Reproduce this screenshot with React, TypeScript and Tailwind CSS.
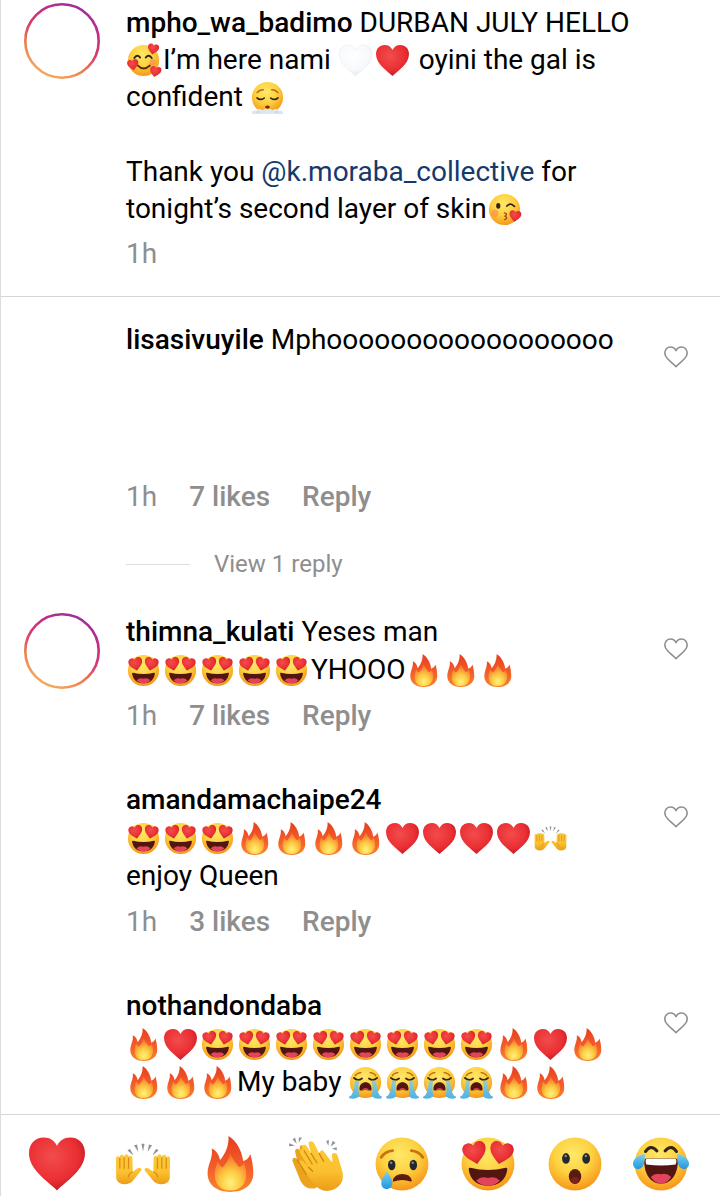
import * as React from 'react';

type EmojiName =
  | 'heart'
  | 'whiteHeart'
  | 'fire'
  | 'hands'
  | 'clap'
  | 'tear'
  | 'heartEyes'
  | 'wow'
  | 'joy'
  | 'adore'
  | 'exhale'
  | 'kiss'
  | 'sob';

const HEART =
  'M18 35C12 29 0 22 0 11C0 5 4 1 9.5 1C13.5 1 16.5 3 18 6.5C19.5 3 22.5 1 26.5 1C32 1 36 5 36 11C36 22 24 29 18 35Z';
const RED_EYE = 'url(#red)';

const face = <circle cx="18" cy="18" r="17" fill="url(#face)" />;

const hand = (
  <g>
    <path
      d="M.6 14.5Q.6 13 1.8 13Q2.8 13 3 14Q3 12 4.4 12Q5.7 12 5.8 13.5Q6 11.8 7.3 11.8Q8.8 11.8 8.8 13.5Q9.3 12.6 10.2 12.8Q11.2 13 11.2 14.5L11.4 23L14.6 20.8Q16.6 20 17 21.3Q17.1 22 16.3 22.8L11.6 28.6Q9.4 31.2 5.8 31Q1.6 30.8.8 27.4Z"
      fill="url(#hand)"
    />
    <path d="M3.1 14V21M5.9 13.6V21M8.7 13.8V21M11.3 23Q8.8 24 8.6 26.6" stroke="#d98b12" strokeWidth=".8" fill="none" />
  </g>
);

const drawings: Record<EmojiName, React.ReactNode> = {
  heart: <path d={HEART} fill="url(#red)" />,
  whiteHeart: <path d={HEART} fill="url(#white)" stroke="#e9edf3" strokeWidth=".6" />,
  fire: (
    <g>
      <path
        d="M17 0C22 3 25.5 9 26.5 16C28.5 15.5 30.3 14 31 11.5C32.2 15 33 19.5 33 24C33 31.5 27 36 18.3 36C9.5 36 3.6 31.5 3.6 24C3.6 18 7.2 14.5 6.3 8C9 9 11 12 11.6 15.5C15 11.5 17.5 6 17 0Z"
        fill="url(#flame)"
      />
      <path
        d="M18 11C20 15.6 22 17.5 23.8 20C25.4 19.6 26.4 18.6 27 17C30 25 29 34.6 18.4 35C8 34.6 6.4 26 10 16.5C11.2 18.6 12 19.8 13.2 20.2C15.5 18 17.6 14.6 18 11Z"
        fill="url(#flameCore)"
      />
    </g>
  ),
  hands: (
    <g>
      {hand}
      <g transform="translate(36 0) scale(-1 1)">{hand}</g>
      <path
        d="M8 9.4L9.6 8.2L12 12.6ZM12.2 6L14.2 5.5L15 10.3ZM17 5H19L18 10ZM21.8 5.5L23.8 6L21 10.3ZM26.4 8.2L28 9.4L24 12.6Z"
        fill="#8e939b"
      />
    </g>
  ),
  clap: (
    <g>
      <path
        d="M3 16.4Q2.4 14.4 4 14Q5 13.7 5.7 15L4.7 10.6Q4.2 8.6 5.8 8.2Q7 8 7.6 9.3Q7.1 6 9 5.8L25 29L17.5 33.6Q11.5 34.8 8.2 29.2Z"
        fill="#eba31d"
      />
      <path
        d="M9.1 6.4Q10.7 4.6 12.4 7L14.7 11L13.4 6Q12.8 3.8 14.6 3.4Q16.2 3.2 17.1 5.1L19.9 11L21 9.6Q22 8.6 23 10L28 16.5Q28.6 17 28.6 15.5L28.2 12.8Q28.2 11 29.8 11Q31.4 11 32 13L34.8 22.2Q37 31 29.3 34.4Q22.2 37.4 16.8 31L7.5 18.8Q6.2 16.8 7.7 15.9Q9 15.1 10.4 16.8L13 19.8L8.2 11.8Q6.9 9.4 8.3 8.5Q9.2 8 10.2 9.2Q8.4 7.3 9.1 6.4Z"
        fill="url(#hand)"
      />
      <path
        d="M5.8 15.2L12 25M10.2 9.2L15.7 18.3M14.7 11L18.8 17.5M19.9 11L23.1 16.6M13 19.8L16 23"
        stroke="#cf8512"
        strokeWidth=".8"
        fill="none"
      />
      <path
        d="M.6 6.6L.9 4.6L4.5 6.2ZM2.9 2.2L4.5 1L5.6 5ZM7 1H9L6.9 4.4ZM24.5 3.2L26.3 2.6L26 6.4ZM28.8 3L30.5 4.5L27.4 6.8ZM31.3 7.2L31.4 9.2L28.2 8.2Z"
        fill="#8e939b"
      />
    </g>
  ),
  tear: (
    <g>
      {face}
      <ellipse cx="11.4" cy="18.6" rx="2.4" ry="3.4" fill="#25292f" />
      <ellipse cx="25.3" cy="18.6" rx="2.4" ry="3.4" fill="#25292f" />
      <circle cx="11" cy="17.2" r=".8" fill="#7d8791" />
      <circle cx="24.9" cy="17.2" r=".8" fill="#7d8791" />
      <path d="M4.6 13.7Q7.5 9.7 12 9.4M24 9.4Q28.5 9.7 31.4 13.7" stroke="#c9730f" strokeWidth="1.8" strokeLinecap="round" fill="none" />
      <path d="M12.6 28.8Q13.5 25 18.2 25Q22.8 25 23.8 28.8Q18 26.8 12.6 28.8Z" fill="#5c1d10" stroke="#5c1d10" strokeWidth="1" strokeLinejoin="round" />
      <path d="M8.4 22.4C7 25.5 4.7 27.3 4.7 30.3C4.7 32.6 6.2 34 8.2 34C10.2 34 11.8 32.5 11.8 30.3C11.8 27.3 9.7 25.5 8.4 22.4Z" fill="url(#water)" />
    </g>
  ),
  heartEyes: (
    <g>
      {face}
      <path d="M6.6 20.4Q18 23.4 29.4 20.4Q30.6 20.2 30.4 21.8C29.4 28.2 24.6 32 18 32C11.4 32 6.6 28.2 5.6 21.8Q5.4 20.2 6.6 20.4Z" fill="#52150f" />
      <path d="M10.4 28.8Q13.5 25.6 18 27Q22.5 25.6 25.6 28.8Q22.4 32 18 32Q13.6 32 10.4 28.8Z" fill="#e2445b" />
      <path transform="translate(.6 5.2) rotate(-12) scale(.42)" d={HEART} fill={RED_EYE} />
      <path transform="translate(20.6 2.1) rotate(12) scale(.42)" d={HEART} fill={RED_EYE} />
    </g>
  ),
  wow: (
    <g>
      {face}
      <ellipse cx="12.2" cy="14.4" rx="2.5" ry="3.4" fill="#25292f" />
      <ellipse cx="25.2" cy="14.4" rx="2.5" ry="3.4" fill="#25292f" />
      <circle cx="12" cy="12.8" r=".8" fill="#7d8791" />
      <circle cx="25" cy="12.8" r=".8" fill="#7d8791" />
      <ellipse cx="18" cy="26" rx="4" ry="4.8" fill="#571b13" />
      <ellipse cx="18" cy="28.3" rx="2.6" ry="2" fill="#7d2318" />
    </g>
  ),
  joy: (
    <g>
      {face}
      <path d="M8 10Q11.4 5 15.4 9.6M20.6 9.6Q24.6 5 28 10" stroke="#33231a" strokeWidth="1.9" strokeLinecap="round" fill="none" />
      <path d="M8.4 14.4H27.6Q28.8 14.6 28.8 16.2C28.8 24.4 24.6 30.6 18 30.6C11.4 30.6 7.2 24.4 7.2 16.2Q7.2 14.6 8.4 14.4Z" fill="#52150f" />
      <path d="M8.6 14.6H27.4Q28.4 16 27.4 18.3Q18 19.7 8.6 18.3Q7.6 16 8.6 14.6Z" fill="#fff" />
      <path d="M11.4 26.4Q14.4 23.4 18 24.6Q21.6 23.4 24.6 26.4Q22 30.6 18 30.6Q14 30.6 11.4 26.4Z" fill="#e2445b" />
      <path d="M7.6 11.4C4 12.4-.6 14.6 0 18.4C.4 21 3 22 5 20.8C7.8 19 7.4 14.8 7.6 11.4Z" fill="url(#water)" />
      <path d="M28.4 11.4C32 12.4 36.6 14.6 36 18.4C35.6 21 33 22 31 20.8C28.2 19 28.6 14.8 28.4 11.4Z" fill="url(#water)" />
    </g>
  ),
  adore: (
    <g>
      {face}
      <circle cx="8" cy="20" r="3.6" fill="#f58a54" opacity=".6" />
      <circle cx="28" cy="20" r="3.6" fill="#f58a54" opacity=".6" />
      <path d="M8 15.2Q11 10.6 14.4 14.8M20.4 14.8Q23.8 10.6 27 15.2" stroke="#33231a" strokeWidth="2" strokeLinecap="round" fill="none" />
      <path d="M12 23.5Q18 30 25 23.5" stroke="#5c2912" strokeWidth="2" strokeLinecap="round" fill="none" />
      <path transform="translate(23.6 -1.4) rotate(10) scale(.34)" d={HEART} fill={RED_EYE} />
      <path transform="translate(-.4 17.6) rotate(-8) scale(.34)" d={HEART} fill={RED_EYE} />
      <path transform="translate(26.2 23) rotate(12) scale(.34)" d={HEART} fill={RED_EYE} />
    </g>
  ),
  exhale: (
    <g>
      {face}
      <path d="M6.8 12.6Q9.4 9.2 13.4 9.6M22.6 9.6Q26.6 9.2 29.2 12.6" stroke="#b9690f" strokeWidth="1.6" strokeLinecap="round" fill="none" />
      <path d="M6.6 18.4Q10 21.8 14.4 18.6M21.6 18.6Q26 21.8 29.4 18.4" stroke="#33231a" strokeWidth="1.8" strokeLinecap="round" fill="none" />
      <ellipse cx="18" cy="28.4" rx="2.5" ry="1.7" fill="#6b2a12" />
      <path
        d="M1 36C0 33 3.4 31.4 5.6 32.4C7 29.8 11 30 12.4 32C14 30 16.5 29.8 18 30.8C19.5 29.8 22 30 23.6 32C25 30 29 29.8 30.4 32.4C32.6 31.4 36 33 35 36Z"
        fill="#dbe7f2"
      />
      <path d="M6 35Q7 32.8 10 34M26 34Q29 32.8 30 35" stroke="#b4c9dc" strokeWidth=".8" fill="none" />
    </g>
  ),
  kiss: (
    <g>
      {face}
      <circle cx="7.4" cy="22.2" r="4" fill="#f7835a" opacity=".55" />
      <ellipse cx="11.2" cy="14" rx="2.3" ry="3.2" fill="#33231a" />
      <path d="M20.6 14.2Q24.4 9.8 28.8 14.6" stroke="#33231a" strokeWidth="2" strokeLinecap="round" fill="none" />
      <path d="M17.8 21.6Q22.4 22.8 18.6 25.2Q22.6 27.2 18 29.2" stroke="#a04a17" strokeWidth="1.4" strokeLinecap="round" fill="none" />
      <path transform="translate(24 18) rotate(8) scale(.36)" d={HEART} fill={RED_EYE} />
    </g>
  ),
  sob: (
    <g>
      {face}
      <path d="M6.8 10.6Q9 7.4 13 7.2M23 7.2Q27 7.4 29.2 10.6" stroke="#b9690f" strokeWidth="1.4" strokeLinecap="round" fill="none" />
      <path d="M5.4 13Q9.4 17 14.2 13.6M21.8 13.6Q26.6 17 30.6 13" stroke="#33231a" strokeWidth="2" strokeLinecap="round" fill="none" />
      <path d="M11.4 25C11.4 20.2 14.4 17.6 18 17.6C21.6 17.6 24.6 20.2 24.6 25Q24.6 27.2 22.8 26.8Q18 25.4 13.2 26.8Q11.4 27.2 11.4 25Z" fill="#52150f" />
      <path d="M13.8 26.4Q18 21.4 22.2 26.4Q18 25.2 13.8 26.4Z" fill="#e2445b" />
      <path d="M6.2 16H11Q9.4 25 11.4 33Q6 37.4 0 35Q-.6 33.4 2.6 32Q6.6 24 6.2 16Z" fill="url(#stream)" />
      <path d="M29.8 16H25Q26.6 25 24.6 33Q30 37.4 36 35Q36.6 33.4 33.4 32Q29.4 24 29.8 16Z" fill="url(#stream)" />
    </g>
  ),
};

function Gradients() {
  return (
    <svg aria-hidden="true" className="absolute h-0 w-0">
      <defs>
        <radialGradient id="face" cx=".46" cy=".32" r=".72">
          <stop offset="0" stopColor="#ffe868" />
          <stop offset=".5" stopColor="#fdd140" />
          <stop offset="1" stopColor="#f58f14" />
        </radialGradient>
        <radialGradient id="red" cx=".42" cy=".36" r=".75">
          <stop offset="0" stopColor="#f24c4c" />
          <stop offset=".6" stopColor="#ea2f33" />
          <stop offset="1" stopColor="#b5101f" />
        </radialGradient>
        <radialGradient id="white" cx=".45" cy=".35" r=".75">
          <stop offset="0" stopColor="#ffffff" />
          <stop offset=".6" stopColor="#f8f9fd" />
          <stop offset="1" stopColor="#dbe1ec" />
        </radialGradient>
        <linearGradient id="flame" x1="0" y1="0" x2="0" y2="1">
          <stop offset="0" stopColor="#e63d1f" />
          <stop offset=".6" stopColor="#f4602a" />
          <stop offset="1" stopColor="#f9862c" />
        </linearGradient>
        <radialGradient id="flameCore" cx=".5" cy=".8" r=".8">
          <stop offset="0" stopColor="#fff17c" />
          <stop offset=".4" stopColor="#fecb42" />
          <stop offset="1" stopColor="#f4602a" />
        </radialGradient>
        <linearGradient id="hand" x1="0" y1="0" x2="0" y2="1">
          <stop offset="0" stopColor="#fccb3a" />
          <stop offset=".6" stopColor="#fbc02f" />
          <stop offset="1" stopColor="#ec9c17" />
        </linearGradient>
        <linearGradient id="water" x1="0" y1="0" x2="0" y2="1">
          <stop offset="0" stopColor="#7fd0f2" />
          <stop offset="1" stopColor="#1f98dd" />
        </linearGradient>
        <linearGradient id="stream" x1="0" y1="0" x2="0" y2="1">
          <stop offset="0" stopColor="#8ecfd0" />
          <stop offset="1" stopColor="#4db1e6" />
        </linearGradient>
        <linearGradient id="ring" x1=".25" y1="1" x2=".75" y2="0">
          <stop offset="0" stopColor="#f7b15f" />
          <stop offset=".3" stopColor="#ec7a4e" />
          <stop offset=".5" stopColor="#d83d6e" />
          <stop offset=".75" stopColor="#c62b85" />
          <stop offset="1" stopColor="#962fa0" />
        </linearGradient>
      </defs>
    </svg>
  );
}

function Emoji({ name, className }: { name: EmojiName; className: string }) {
  return (
    <svg viewBox="0 0 36 36" role="img" aria-label={name} className={className}>
      {drawings[name]}
    </svg>
  );
}

/* Emoji set inside a line of text */
function E({ name, count = 1 }: { name: EmojiName; count?: number }) {
  return (
    <>
      {Array.from({ length: count }, (_, i) => (
        <Emoji key={i} name={name} className="mr-[3px] ml-px inline size-[33px] overflow-visible align-[-8px]" />
      ))}
    </>
  );
}

function Avatar({ story }: { story?: boolean }) {
  return (
    <div className="size-[76px] shrink-0">
      {story ? (
        <svg viewBox="0 0 76 76" aria-hidden="true" className="size-full">
          <circle cx="38" cy="38" r="36.7" fill="none" stroke="url(#ring)" strokeWidth="2.6" />
        </svg>
      ) : null}
    </div>
  );
}

type CommentProps = {
  user: string;
  likes: string;
  story?: boolean;
  replies?: number;
  children: React.ReactNode;
};

function Comment({ user, likes, story, replies, children }: CommentProps) {
  return (
    <li className="flex gap-[26px] pr-8 pl-[23px]">
      <Avatar story={story} />
      <div className="min-w-0 flex-1">
        <p className="leading-[38px]">
          <a href={`#${user}`} className="font-medium">
            {user}
          </a>{' '}
          {children}
        </p>
        <div className="mt-2 flex gap-8 text-[#8e8e8e]">
          <span>1h</span>
          <button type="button" className="font-medium">
            {likes}
          </button>
          <button type="button" className="font-medium">
            Reply
          </button>
        </div>
        {replies ? (
          <button type="button" className="mt-[31px] -mb-[17px] flex items-center gap-6 text-2xl leading-[37px] text-[#8e8e8e]">
            <span className="h-px w-16 bg-[#dedede]" />
            View {replies} reply
          </button>
        ) : null}
      </div>
      <button type="button" aria-label={`Like comment by ${user}`} className="mt-6 size-6 shrink-0">
        <svg viewBox="0 0 24 24" fill="none" stroke="#8e8e8e" strokeWidth="1.6" strokeLinejoin="round" className="size-full">
          <path d="M12 21.6C9.6 19.2 6.2 16.6 3.6 13.8C1.9 12 .8 10.3.8 8C.8 4.6 3.3 2 6.5 2C8.9 2 10.8 3.2 12 5.6C13.2 3.2 15.1 2 17.5 2C20.7 2 23.2 4.6 23.2 8C23.2 10.3 22.1 12 20.4 13.8C17.8 16.6 14.4 19.2 12 21.6Z" />
        </svg>
      </button>
    </li>
  );
}

const quickReactions: EmojiName[] = ['heart', 'hands', 'fire', 'clap', 'tear', 'heartEyes', 'wow', 'joy'];

export default function App() {
  return (
    <div className="flex h-dvh flex-col border-l border-[#dcdcdc] bg-white font-['Roboto',sans-serif] text-[28px] leading-[37px] text-black">
      <Gradients />

      <main className="min-h-0 flex-1 overflow-hidden">
        {/* Caption */}
        <section className="flex gap-[26px] border-b border-[#d6d6d6] pt-[3px] pr-12 pb-6 pl-[23px]">
          <Avatar story />
          <div className="min-w-0 flex-1 pt-px">
            <p>
              <a href="#mpho_wa_badimo" className="font-medium">
                mpho_wa_badimo
              </a>{' '}
              DURBAN JULY HELLO
              <br />
              <E name="adore" />
              I’m here nami <E name="whiteHeart" />
              <E name="heart" /> oyini the gal is
              <br />
              confident <E name="exhale" />
            </p>
            <p className="mt-[38px]">
              Thank you{' '}
              <a href="#k.moraba_collective" className="text-[#14396b]">
                @k.moraba_collective
              </a>{' '}
              for
              <br />
              tonight’s second layer of skin
              <E name="kiss" />
            </p>
            <p className="mt-2 text-[#8e8e8e]">1h</p>
          </div>
        </section>

        {/* Comments */}
        <ul className="flex flex-col gap-[47px] pt-6">
          <Comment user="lisasivuyile" likes="7 likes" replies={1}>
            <span className="inline-block pb-[111px]">Mphoooooooooooooooooo</span>
          </Comment>
          <Comment user="thimna_kulati" likes="7 likes" story>
            Yeses man
            <br />
            <E name="heartEyes" count={5} />
            YHOOO
            <E name="fire" count={3} />
          </Comment>
          <Comment user="amandamachaipe24" likes="3 likes">
            <br />
            <E name="heartEyes" count={3} />
            <E name="fire" count={4} />
            <E name="heart" count={4} />
            <E name="hands" />
            <br />
            enjoy Queen
          </Comment>
          <Comment user="nothandondaba" likes="3 likes">
            <br />
            <E name="fire" />
            <E name="heart" />
            <E name="heartEyes" count={8} />
            <E name="fire" />
            <E name="heart" />
            <E name="fire" />
            <br />
            <E name="fire" count={3} />
            My baby <E name="sob" count={4} />
            <E name="fire" count={2} />
          </Comment>
        </ul>
      </main>

      {/* Quick reactions */}
      <footer className="grid shrink-0 grid-cols-8 border-t border-[#d6d6d6] bg-white pt-[21px] pr-4 pb-1 pl-[13px]">
        {quickReactions.map((name) => (
          <button key={name} type="button" aria-label={`React with ${name}`} className="flex justify-center">
            <Emoji name={name} className="size-14 overflow-visible" />
          </button>
        ))}
      </footer>
    </div>
  );
}
